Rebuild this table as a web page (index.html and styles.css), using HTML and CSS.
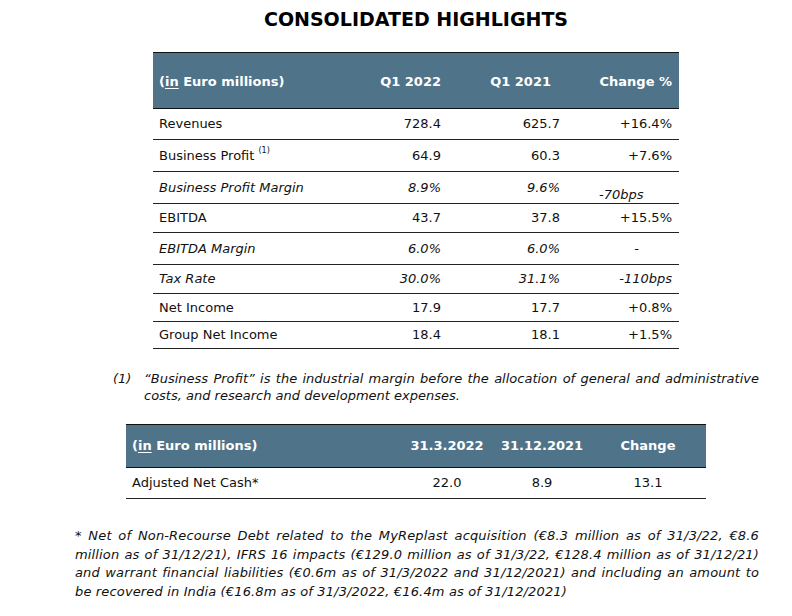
FILE: index.html
```html
<!DOCTYPE html>
<html>
<head>
<meta charset="utf-8">
<link rel="stylesheet" href="styles.css">
</head>
<body>
<div class="page">
  <section class="main">
    <h1 class="title">CONSOLIDATED HIGHLIGHTS</h1>
    <table class="hl">
      <colgroup>
        <col class="c1"><col class="c2"><col class="c3"><col class="c4">
      </colgroup>
      <thead>
        <tr>
          <th class="lbl">(<u>in</u> Euro millions)</th>
          <th>Q1 2022</th>
          <th class="h3">Q1 2021</th>
          <th>Change %</th>
        </tr>
      </thead>
      <tbody>
        <tr class="r31"><td class="lbl">Revenues</td><td>728.4</td><td>625.7</td><td>+16.4%</td></tr>
        <tr class="r32"><td class="lbl">Business Profit <sup>(1)</sup></td><td>64.9</td><td>60.3</td><td>+7.6%</td></tr>
        <tr class="r32 it"><td class="lbl">Business Profit Margin</td><td>8.9%</td><td>9.6%</td><td class="low">-70bps</td></tr>
        <tr class="r29"><td class="lbl">EBITDA</td><td>43.7</td><td>37.8</td><td>+15.5%</td></tr>
        <tr class="r32 it"><td class="lbl">EBITDA Margin</td><td>6.0%</td><td>6.0%</td><td class="dash">-</td></tr>
        <tr class="r29 it"><td class="lbl">Tax Rate</td><td>30.0%</td><td>31.1%</td><td>-110bps</td></tr>
        <tr class="r28"><td class="lbl">Net Income</td><td>17.9</td><td>17.7</td><td>+0.8%</td></tr>
        <tr class="r27"><td class="lbl">Group Net Income</td><td>18.4</td><td>18.1</td><td>+1.5%</td></tr>
      </tbody>
    </table>
  </section>

  <div class="note1">
    <span class="num">(1)</span>
    <p>“Business Profit” is the industrial margin before the allocation of general and administrative costs, and research and development expenses.</p>
  </div>

  <table class="cash">
    <colgroup>
      <col class="d1"><col class="d2"><col class="d3"><col class="d4">
    </colgroup>
    <thead>
      <tr>
        <th class="lbl">(<u>in</u> Euro millions)</th>
        <th>31.3.2022</th>
        <th>31.12.2021</th>
        <th>Change</th>
      </tr>
    </thead>
    <tbody>
      <tr><td class="lbl">Adjusted Net Cash*</td><td>22.0</td><td>8.9</td><td>13.1</td></tr>
    </tbody>
  </table>

  <p class="note2">* Net of Non-Recourse Debt related to the MyReplast acquisition (€8.3 million as of 31/3/22, €8.6 million as of 31/12/21), IFRS 16 impacts (€129.0 million as of 31/3/22, €128.4 million as of 31/12/21) and warrant financial liabilities (€0.6m as of 31/3/2022 and 31/12/2021) and including an amount to be recovered in India (€16.8m as of 31/3/2022, €16.4m as of 31/12/2021)</p>
</div>
</body>
</html>
```

FILE: styles.css
```css
html, body {
  margin: 0;
  padding: 0;
  background: #ffffff;
}

body {
  font-family: "DejaVu Sans", Verdana, sans-serif;
  font-size: 13px;
  color: #111;
  width: 792px;
  height: 616px;
  overflow: hidden;
}

.page {
  display: flex;
  flex-direction: column;
  align-items: flex-start;
}

.main {
  margin-left: 153px;
  width: 526px;
  display: flex;
  flex-direction: column;
}

.title {
  margin: 0;
  padding-top: 7px;
  font-size: 19px;
  line-height: 24px;
  font-weight: bold;
  text-align: center;
  color: #000;
}

table {
  border-collapse: collapse;
  table-layout: fixed;
}

.hl {
  margin-top: 21px;
  width: 526px;
}

.c1 { width: 187px; }
.c2 { width: 108px; }
.c3 { width: 119px; }
.c4 { width: 112px; }

thead tr {
  background: #4f7388;
  border-top: 1px solid #111;
  border-bottom: 1px solid #111;
}

th {
  color: #fff;
  font-weight: bold;
  text-align: right;
  padding: 0 7px 0 6px;
  line-height: 16px;
}

th.lbl, td.lbl {
  text-align: left;
}

th u {
  text-decoration-thickness: 1px;
  text-underline-offset: 2px;
}

.hl thead tr { height: 56px; }
.hl th { padding-top: 2px; }
.hl th.h3 { padding-right: 16px; }

td {
  text-align: right;
  padding: 0 7px 0 6px;
  line-height: 16px;
  white-space: nowrap;
}

tbody tr {
  border-bottom: 1px solid #222;
}

.r31 { height: 31px; }
.r32 { height: 32px; }
.r29 { height: 29px; }
.r28 { height: 28px; }
.r27 { height: 27px; }

.it td { font-style: italic; }

td.low {
  text-align: left;
  padding-left: 32px;
  vertical-align: bottom;
}

td.dash {
  padding-right: 40px;
}

sup {
  font-size: 8px;
  vertical-align: top;
  position: relative;
  top: -1px;
  line-height: 8px;
}

.note1 {
  margin-top: 21px;
  margin-left: 113px;
  width: 646px;
  display: flex;
  font-style: italic;
  line-height: 17px;
}

.note1 .num {
  width: 31px;
  flex: none;
}

.note1 p {
  margin: 0;
  text-align: justify;
}

.cash {
  margin-top: 20px;
  margin-left: 126px;
  width: 580px;
}

.d1 { width: 274px; }
.d2 { width: 94px; }
.d3 { width: 96px; }
.d4 { width: 116px; }

.cash thead tr { height: 43px; }
.cash th { text-align: center; padding: 0; }
.cash th.lbl { padding-left: 6px; text-align: left; }
.cash tbody tr { height: 31px; }
.cash td { text-align: center; padding: 0; }
.cash td.lbl { text-align: left; padding-left: 6px; }

.note2 {
  margin: 28px 0 0 75px;
  width: 684px;
  font-style: italic;
  line-height: 18.5px;
  letter-spacing: 0.15px;
  text-align: justify;
}
```
